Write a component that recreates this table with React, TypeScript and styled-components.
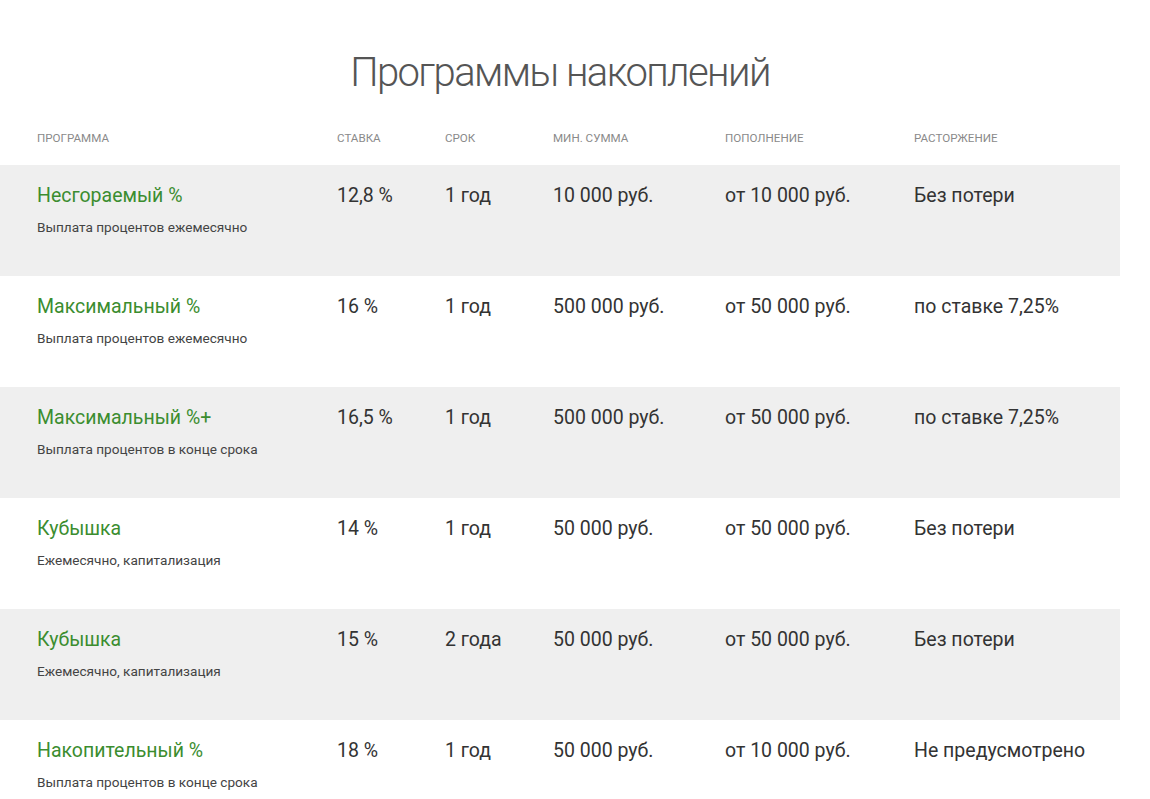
import React from "react";
import styled, { createGlobalStyle } from "styled-components";

const GlobalStyle = createGlobalStyle`
  html, body {
    margin: 0;
    padding: 0;
    background: #ffffff;
  }
  body {
    font-family: Roboto, "Noto Sans", Arial, sans-serif;
    -webkit-font-smoothing: antialiased;
  }
`;

const Page = styled.div`
  width: 1120px;
  padding-top: 48px;
`;

const Title = styled.h1`
  margin: 0;
  text-align: center;
  font-family: Roboto, "Liberation Sans", sans-serif;
  font-weight: 300;
  font-size: 40px;
  letter-spacing: -1.6px;
  line-height: 50px;
  color: #555555;
`;

const Grid = styled.div`
  display: grid;
  grid-template-columns: 300px 108px 108px 172px 189px 1fr;
  padding-left: 37px;
`;

const HeaderRow = styled(Grid)`
  padding-top: 33px;
  padding-bottom: 20px;
`;

const HeaderCell = styled.div`
  font-size: 11.6px;
  line-height: 14px;
  text-transform: uppercase;
  color: #8a8a8a;
`;

const Row = styled(Grid)<{ $shaded: boolean }>`
  height: 111px;
  box-sizing: border-box;
  padding-top: 19px;
  background: ${(p) => (p.$shaded ? "#efefef" : "#ffffff")};
`;

const NameCell = styled.div`
  display: flex;
  flex-direction: column;
`;

const Name = styled.div`
  font-size: 19.5px;
  line-height: 24px;
  color: #3b8d2f;
`;

const Note = styled.div`
  margin-top: 11px;
  font-size: 13.6px;
  line-height: 17px;
  color: #444444;
`;

const Value = styled.div`
  font-size: 19.5px;
  line-height: 24px;
  color: #333333;
`;

const headers = [
  "Программа",
  "Ставка",
  "Срок",
  "Мин. сумма",
  "Пополнение",
  "Расторжение",
];

const rows = [
  {
    name: "Несгораемый %",
    note: "Выплата процентов ежемесячно",
    rate: "12,8 %",
    term: "1 год",
    min: "10 000 руб.",
    add: "от 10 000 руб.",
    end: "Без потери",
  },
  {
    name: "Максимальный %",
    note: "Выплата процентов ежемесячно",
    rate: "16 %",
    term: "1 год",
    min: "500 000 руб.",
    add: "от 50 000 руб.",
    end: "по ставке 7,25%",
  },
  {
    name: "Максимальный %+",
    note: "Выплата процентов в конце срока",
    rate: "16,5 %",
    term: "1 год",
    min: "500 000 руб.",
    add: "от 50 000 руб.",
    end: "по ставке 7,25%",
  },
  {
    name: "Кубышка",
    note: "Ежемесячно, капитализация",
    rate: "14 %",
    term: "1 год",
    min: "50 000 руб.",
    add: "от 50 000 руб.",
    end: "Без потери",
  },
  {
    name: "Кубышка",
    note: "Ежемесячно, капитализация",
    rate: "15 %",
    term: "2 года",
    min: "50 000 руб.",
    add: "от 50 000 руб.",
    end: "Без потери",
  },
  {
    name: "Накопительный %",
    note: "Выплата процентов в конце срока",
    rate: "18 %",
    term: "1 год",
    min: "50 000 руб.",
    add: "от 10 000 руб.",
    end: "Не предусмотрено",
  },
];

export default function App() {
  return (
    <>
      <GlobalStyle />
      <Page>
        <Title>Программы накоплений</Title>
        <HeaderRow>
          {headers.map((h) => (
            <HeaderCell key={h}>{h}</HeaderCell>
          ))}
        </HeaderRow>
        {rows.map((r, i) => (
          <Row key={i} $shaded={i % 2 === 0}>
            <NameCell>
              <Name>{r.name}</Name>
              <Note>{r.note}</Note>
            </NameCell>
            <Value>{r.rate}</Value>
            <Value>{r.term}</Value>
            <Value>{r.min}</Value>
            <Value>{r.add}</Value>
            <Value>{r.end}</Value>
          </Row>
        ))}
      </Page>
    </>
  );
}
